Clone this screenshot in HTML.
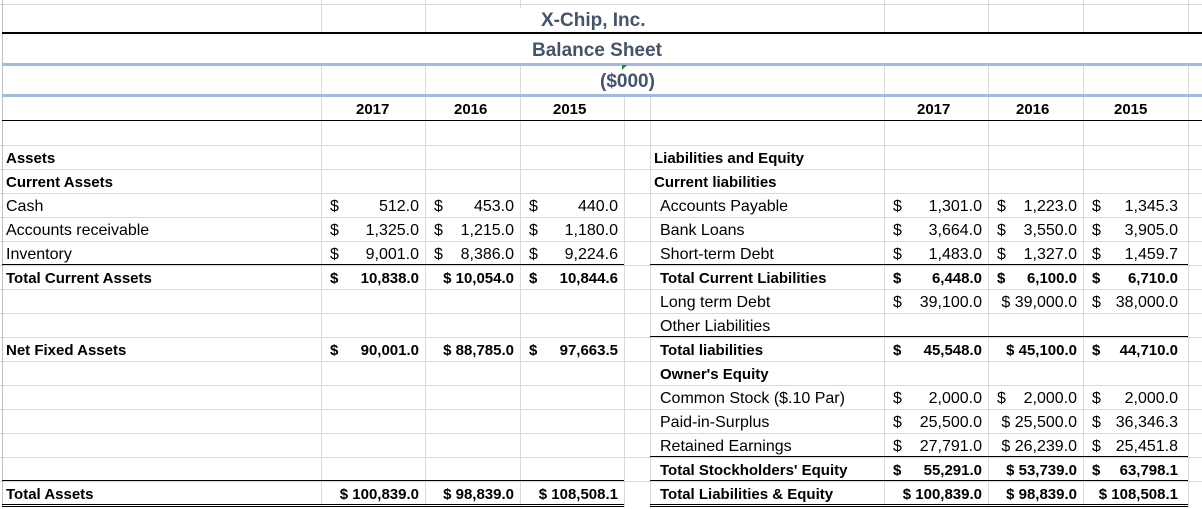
<!DOCTYPE html>
<html><head><meta charset="utf-8"><style>
body{margin:0;width:1202px;height:507px;overflow:hidden;background:#fff;font-family:"Liberation Sans",Arial,sans-serif;font-size:16px;color:#000;position:relative}
.h{position:absolute;left:0;width:1202px;height:1px;background:#d9d9d9}
.v{position:absolute;width:1px;background:#d9d9d9}
.c{position:absolute;height:24px;line-height:28px;white-space:nowrap}
.b{font-weight:bold;font-size:15px}
.n{position:absolute;height:24px;line-height:28px;white-space:nowrap}
.n .d{position:absolute;left:9px}
.n .r{position:absolute;right:6px}
.k{position:absolute;height:1px;background:#000}
.t{position:absolute;color:#44546a;font-weight:bold;font-size:19px;white-space:nowrap}
</style></head><body>
<div class="h" style="top:4px"></div>
<div class="h" style="top:145px"></div><div class="h" style="top:169px"></div><div class="h" style="top:193px"></div><div class="h" style="top:217px"></div><div class="h" style="top:241px"></div><div class="h" style="top:265px"></div><div class="h" style="top:289px"></div><div class="h" style="top:313px"></div><div class="h" style="top:337px"></div><div class="h" style="top:361px"></div><div class="h" style="top:385px"></div><div class="h" style="top:409px"></div><div class="h" style="top:433px"></div><div class="h" style="top:457px"></div><div class="h" style="top:481px"></div>
<div class="v" style="left:2px;top:0;height:507px;background:#c0c0c0"></div>
<div class="v" style="left:321px;top:0;height:33px"></div><div class="v" style="left:425px;top:0;height:33px"></div><div class="v" style="left:520px;top:0;height:8px"></div><div class="v" style="left:884px;top:0;height:33px"></div><div class="v" style="left:988px;top:0;height:33px"></div><div class="v" style="left:1083px;top:0;height:33px"></div><div class="v" style="left:1188px;top:0;height:33px"></div>
<div class="v" style="left:321px;top:64px;height:443px"></div><div class="v" style="left:425px;top:64px;height:443px"></div><div class="v" style="left:520px;top:64px;height:443px"></div><div class="v" style="left:624px;top:95px;height:412px"></div><div class="v" style="left:650px;top:95px;height:412px"></div>
<div class="v" style="left:884px;top:64px;height:443px"></div><div class="v" style="left:988px;top:64px;height:443px"></div><div class="v" style="left:1083px;top:64px;height:443px"></div><div class="v" style="left:1188px;top:64px;height:443px"></div>
<div class="k" style="left:2px;top:32px;width:1200px;height:2px"></div>
<div class="k" style="left:2px;top:63px;width:1200px;height:3px;background:#a4b8e0"></div>
<div class="k" style="left:2px;top:94px;width:1200px;height:3px;background:#a4b8e0"></div>
<div class="k" style="left:2px;top:120px;width:1200px"></div>
<div class="t" style="left:541px;top:10px">X-Chip, Inc.</div>
<div class="t" style="left:532px;top:40px">Balance Sheet</div>
<div class="t" style="left:600px;top:71px">($000)</div>
<div style="position:absolute;left:622px;top:65px;width:0;height:0;border-top:5px solid #1a8a1a;border-right:5px solid transparent"></div>
<div class="c b" style="left:356px;top:96px">2017</div><div class="c b" style="left:454px;top:96px">2016</div><div class="c b" style="left:553px;top:96px">2015</div>
<div class="c b" style="left:917px;top:96px">2017</div><div class="c b" style="left:1016px;top:96px">2016</div><div class="c b" style="left:1114px;top:96px">2015</div>
<div class="k" style="left:2px;top:264px;width:622px"></div>
<div class="k" style="left:650px;top:264px;width:538px"></div>
<div class="k" style="left:650px;top:336px;width:538px"></div>
<div class="k" style="left:650px;top:456px;width:538px"></div>
<div class="k" style="left:2px;top:480px;width:622px"></div>
<div class="k" style="left:650px;top:480px;width:538px"></div>
<div class="k" style="left:2px;top:504px;width:622px"></div><div class="k" style="left:2px;top:506px;width:622px"></div>
<div class="k" style="left:650px;top:504px;width:538px"></div><div class="k" style="left:650px;top:506px;width:538px"></div>
<div class="c b" style="left:6px;top:145px">Assets</div>
<div class="c b" style="left:6px;top:169px">Current Assets</div>
<div class="c" style="left:6px;top:193px">Cash</div>
<div class="c" style="left:6px;top:217px">Accounts receivable</div>
<div class="c" style="left:6px;top:241px">Inventory</div>
<div class="c b" style="left:6px;top:265px">Total Current Assets</div>
<div class="c b" style="left:6px;top:337px">Net Fixed Assets</div>
<div class="c b" style="left:6px;top:481px">Total Assets</div>
<div class="n" style="left:321px;width:104px;top:193px"><span class="d">$</span><span class="r">512.0</span></div>
<div class="n" style="left:425px;width:95px;top:193px"><span class="d">$</span><span class="r">453.0</span></div>
<div class="n" style="left:520px;width:104px;top:193px"><span class="d">$</span><span class="r">440.0</span></div>
<div class="n" style="left:321px;width:104px;top:217px"><span class="d">$</span><span class="r">1,325.0</span></div>
<div class="n" style="left:425px;width:95px;top:217px"><span class="d">$</span><span class="r">1,215.0</span></div>
<div class="n" style="left:520px;width:104px;top:217px"><span class="d">$</span><span class="r">1,180.0</span></div>
<div class="n" style="left:321px;width:104px;top:241px"><span class="d">$</span><span class="r">9,001.0</span></div>
<div class="n" style="left:425px;width:95px;top:241px"><span class="d">$</span><span class="r">8,386.0</span></div>
<div class="n" style="left:520px;width:104px;top:241px"><span class="d">$</span><span class="r">9,224.6</span></div>
<div class="n b" style="left:321px;width:104px;top:265px"><span class="d">$</span><span class="r">10,838.0</span></div>
<div class="n b" style="left:425px;width:95px;top:265px"><span class="r">$ 10,054.0</span></div>
<div class="n b" style="left:520px;width:104px;top:265px"><span class="d">$</span><span class="r">10,844.6</span></div>
<div class="n b" style="left:321px;width:104px;top:337px"><span class="d">$</span><span class="r">90,001.0</span></div>
<div class="n b" style="left:425px;width:95px;top:337px"><span class="r">$ 88,785.0</span></div>
<div class="n b" style="left:520px;width:104px;top:337px"><span class="d">$</span><span class="r">97,663.5</span></div>
<div class="n b" style="left:321px;width:104px;top:481px"><span class="r">$ 100,839.0</span></div>
<div class="n b" style="left:425px;width:95px;top:481px"><span class="r">$ 98,839.0</span></div>
<div class="n b" style="left:520px;width:104px;top:481px"><span class="r">$ 108,508.1</span></div>
<div class="c b" style="left:654px;top:145px">Liabilities and Equity</div>
<div class="c b" style="left:654px;top:169px">Current liabilities</div>
<div class="c" style="left:660px;top:193px">Accounts Payable</div>
<div class="c" style="left:660px;top:217px">Bank Loans</div>
<div class="c" style="left:660px;top:241px">Short-term Debt</div>
<div class="c b" style="left:660px;top:265px">Total Current Liabilities</div>
<div class="c" style="left:660px;top:289px">Long term Debt</div>
<div class="c" style="left:660px;top:313px">Other Liabilities</div>
<div class="c b" style="left:660px;top:337px">Total liabilities</div>
<div class="c b" style="left:660px;top:361px">Owner's Equity</div>
<div class="c" style="left:660px;top:385px">Common Stock ($.10 Par)</div>
<div class="c" style="left:660px;top:409px">Paid-in-Surplus</div>
<div class="c" style="left:660px;top:433px">Retained Earnings</div>
<div class="c b" style="left:660px;top:457px">Total Stockholders' Equity</div>
<div class="c b" style="left:660px;top:481px">Total Liabilities &amp; Equity</div>
<div class="n" style="left:884px;width:104px;top:193px"><span class="d">$</span><span class="r">1,301.0</span></div>
<div class="n" style="left:988px;width:95px;top:193px"><span class="d">$</span><span class="r">1,223.0</span></div>
<div class="n" style="left:1083px;width:101px;top:193px"><span class="d">$</span><span class="r">1,345.3</span></div>
<div class="n" style="left:884px;width:104px;top:217px"><span class="d">$</span><span class="r">3,664.0</span></div>
<div class="n" style="left:988px;width:95px;top:217px"><span class="d">$</span><span class="r">3,550.0</span></div>
<div class="n" style="left:1083px;width:101px;top:217px"><span class="d">$</span><span class="r">3,905.0</span></div>
<div class="n" style="left:884px;width:104px;top:241px"><span class="d">$</span><span class="r">1,483.0</span></div>
<div class="n" style="left:988px;width:95px;top:241px"><span class="d">$</span><span class="r">1,327.0</span></div>
<div class="n" style="left:1083px;width:101px;top:241px"><span class="d">$</span><span class="r">1,459.7</span></div>
<div class="n b" style="left:884px;width:104px;top:265px"><span class="d">$</span><span class="r">6,448.0</span></div>
<div class="n b" style="left:988px;width:95px;top:265px"><span class="d">$</span><span class="r">6,100.0</span></div>
<div class="n b" style="left:1083px;width:101px;top:265px"><span class="d">$</span><span class="r">6,710.0</span></div>
<div class="n" style="left:884px;width:104px;top:289px"><span class="d">$</span><span class="r">39,100.0</span></div>
<div class="n" style="left:988px;width:95px;top:289px"><span class="r">$ 39,000.0</span></div>
<div class="n" style="left:1083px;width:101px;top:289px"><span class="d">$</span><span class="r">38,000.0</span></div>
<div class="n b" style="left:884px;width:104px;top:337px"><span class="d">$</span><span class="r">45,548.0</span></div>
<div class="n b" style="left:988px;width:95px;top:337px"><span class="r">$ 45,100.0</span></div>
<div class="n b" style="left:1083px;width:101px;top:337px"><span class="d">$</span><span class="r">44,710.0</span></div>
<div class="n" style="left:884px;width:104px;top:385px"><span class="d">$</span><span class="r">2,000.0</span></div>
<div class="n" style="left:988px;width:95px;top:385px"><span class="d">$</span><span class="r">2,000.0</span></div>
<div class="n" style="left:1083px;width:101px;top:385px"><span class="d">$</span><span class="r">2,000.0</span></div>
<div class="n" style="left:884px;width:104px;top:409px"><span class="d">$</span><span class="r">25,500.0</span></div>
<div class="n" style="left:988px;width:95px;top:409px"><span class="r">$ 25,500.0</span></div>
<div class="n" style="left:1083px;width:101px;top:409px"><span class="d">$</span><span class="r">36,346.3</span></div>
<div class="n" style="left:884px;width:104px;top:433px"><span class="d">$</span><span class="r">27,791.0</span></div>
<div class="n" style="left:988px;width:95px;top:433px"><span class="r">$ 26,239.0</span></div>
<div class="n" style="left:1083px;width:101px;top:433px"><span class="d">$</span><span class="r">25,451.8</span></div>
<div class="n b" style="left:884px;width:104px;top:457px"><span class="d">$</span><span class="r">55,291.0</span></div>
<div class="n b" style="left:988px;width:95px;top:457px"><span class="r">$ 53,739.0</span></div>
<div class="n b" style="left:1083px;width:101px;top:457px"><span class="d">$</span><span class="r">63,798.1</span></div>
<div class="n b" style="left:884px;width:104px;top:481px"><span class="r">$ 100,839.0</span></div>
<div class="n b" style="left:988px;width:95px;top:481px"><span class="r">$ 98,839.0</span></div>
<div class="n b" style="left:1083px;width:101px;top:481px"><span class="r">$ 108,508.1</span></div>
</body></html>
